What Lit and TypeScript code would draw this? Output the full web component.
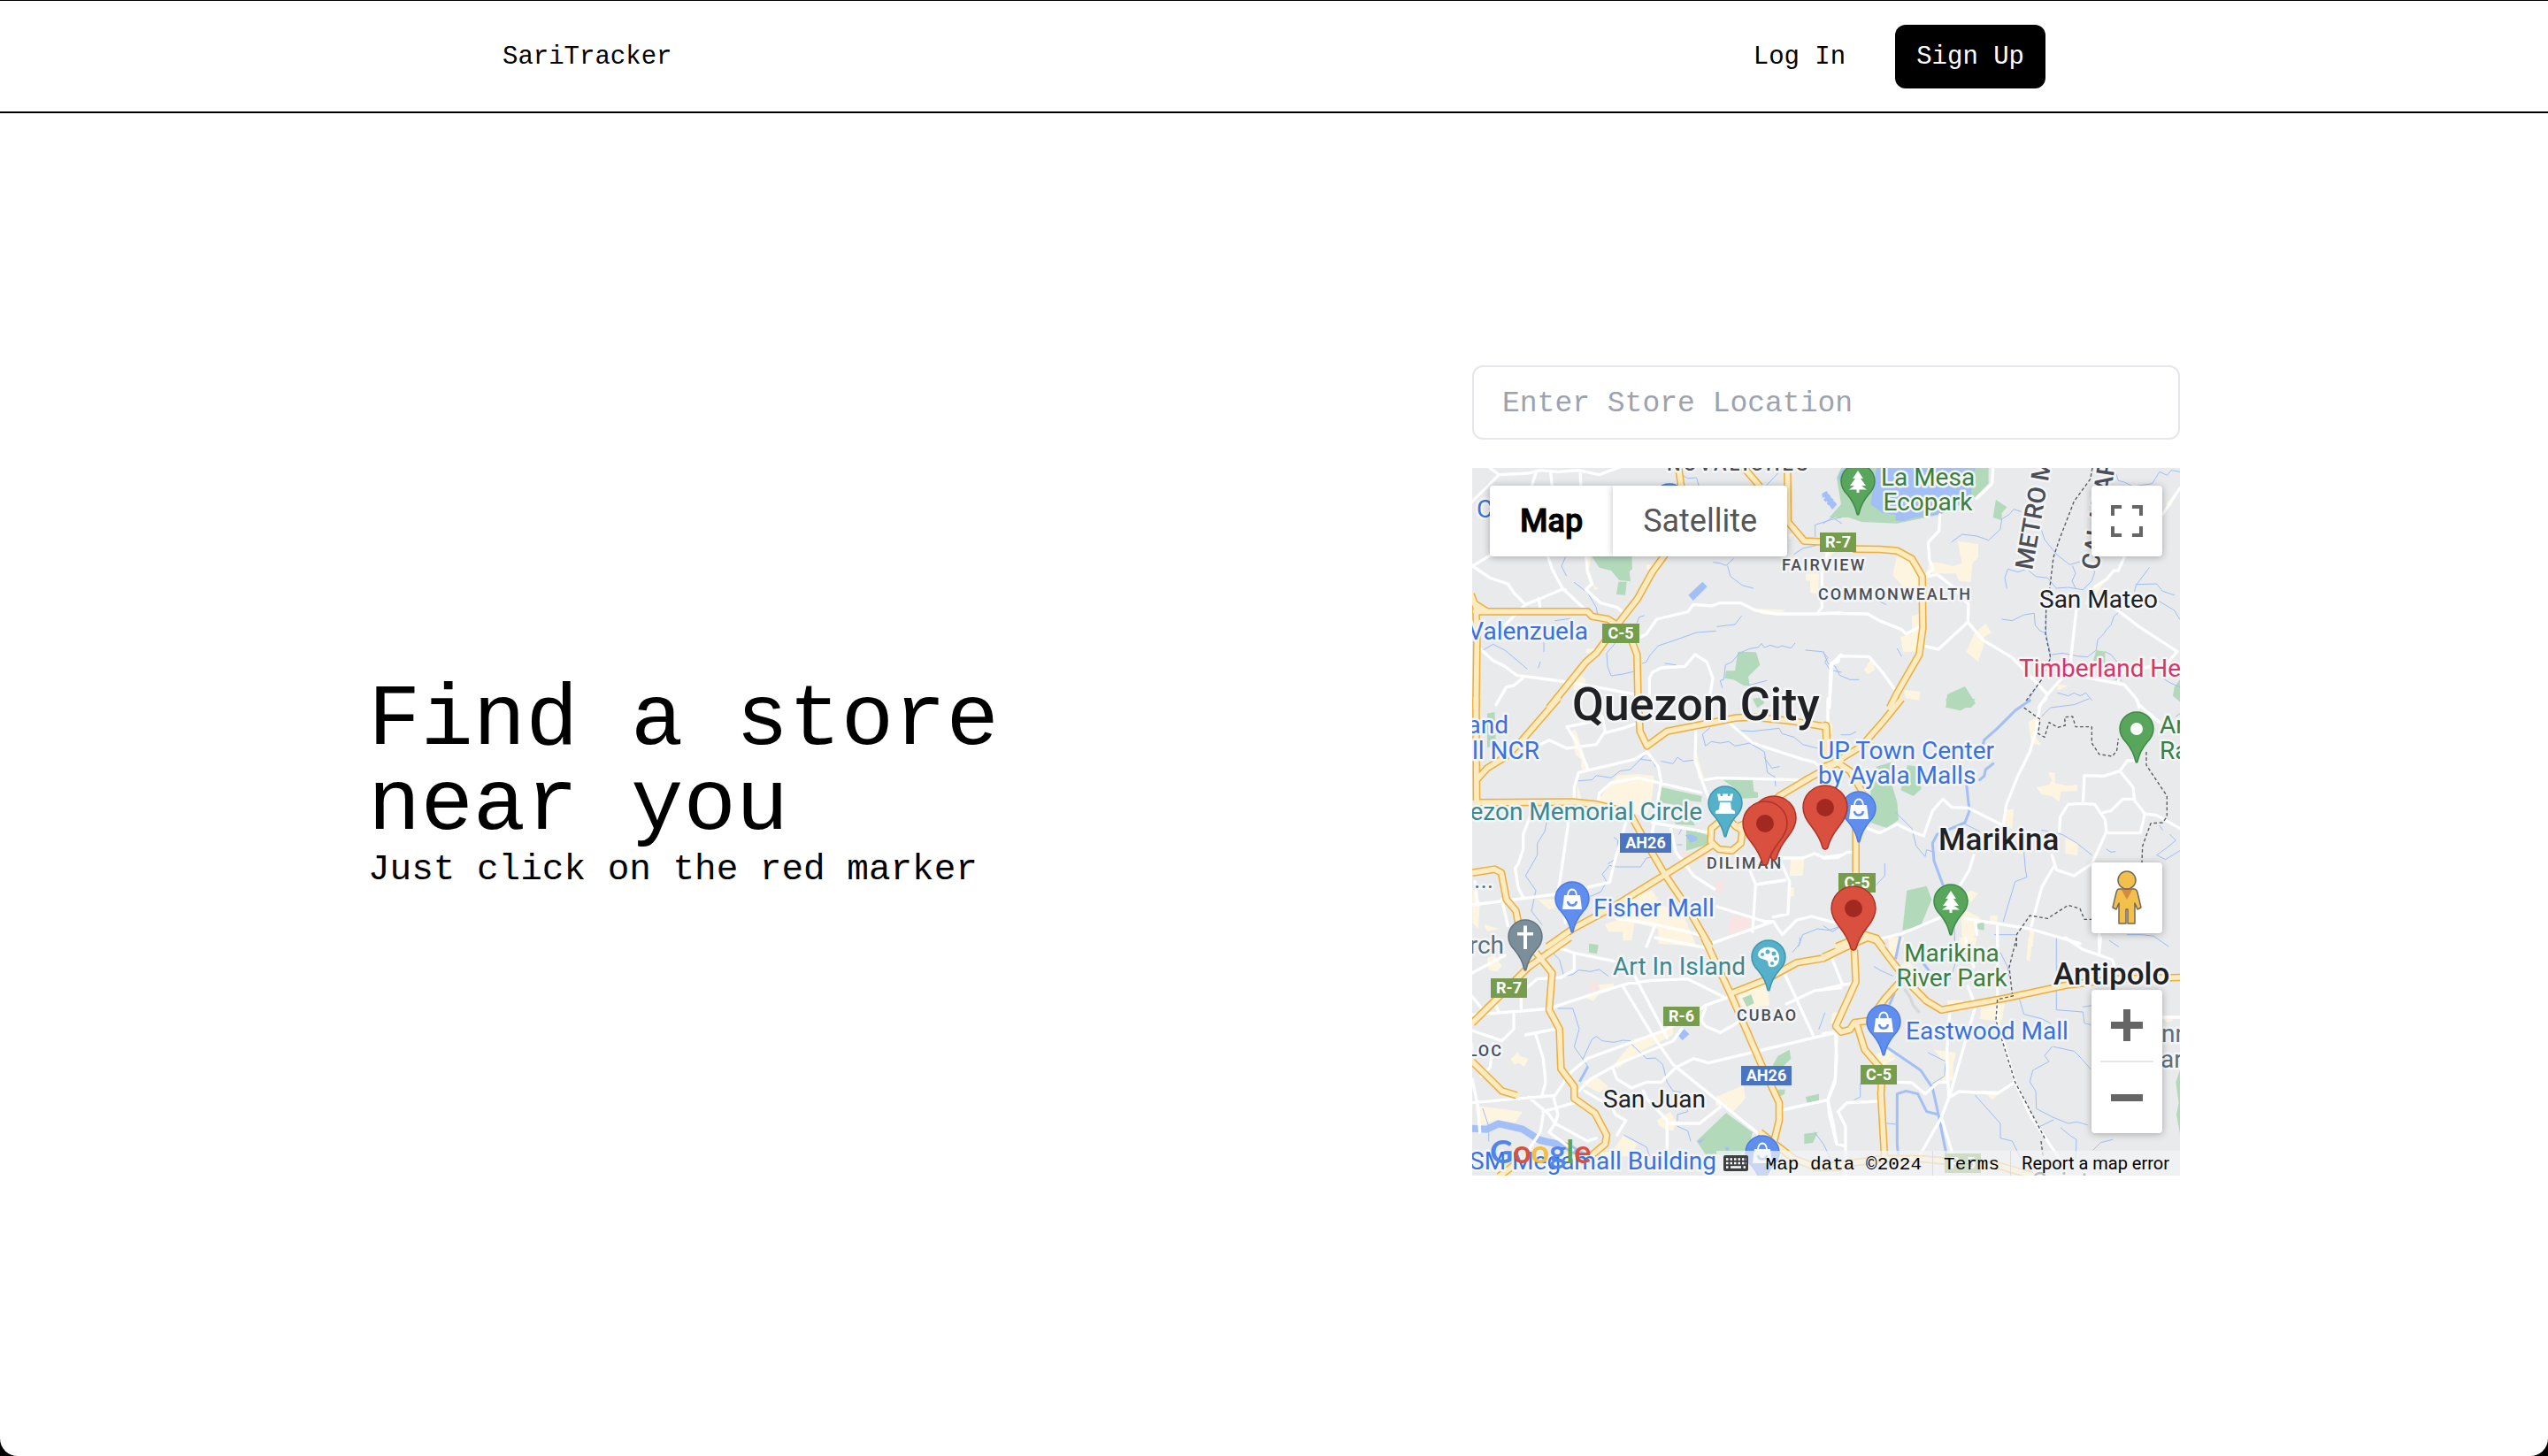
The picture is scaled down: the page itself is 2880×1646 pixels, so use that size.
import { LitElement, html, svg, css } from "lit";
import { customElement, state } from "lit/decorators.js";

/* ---------- Map geometry: six tiles, each drawn in its own coordinates ---------- */

interface Tile {
  x: number;
  y: number;
  park: string;
  built: string;
  pink?: string;
  lake?: string;
  river?: string;
  creek: string;
  street: string;
  highway: string;
  border?: string;
}

const TILES: Tile[] = [
  {
    x: -9, y: -27,
    park: "M413 325L550 325 552 370 542 378 546 412 508 408 480 375 440 365ZM505 413L533 413 528 458 498 456ZM910 650L972 652 985 695 945 735 950 765 930 765 895 745 865 740 870 715 900 715ZM960 810L990 805 1000 825 975 840Z",
    built: "M395 325L412 330 405 370 425 430 440 435 425 442 398 375ZM600 355L645 355 640 385 600 370ZM975 505L1070 508 1050 528 985 522ZM1140 385L1185 385 1182 455 1155 450 1155 410 1140 408ZM395 640L460 640 440 660 395 655ZM370 725L395 745 385 780 350 780ZM1080 250L1100 250 1085 270ZM1190 300L1240 310 1220 330Z",
    lake: "M742 458L790 413 806 430 758 477ZM1195 115L1210 105 1216 112 1197 130ZM1200 134L1219 116 1225 124 1208 143ZM1211 147L1228 128 1235 136 1218 155ZM1222 159L1238 140 1245 150 1232 166Z",
    creek: "M325 330L312 360 328 392M355 415L400 450 430 500 435 530M45 645L80 625 120 645 195 708M252 620L252 650M240 685L233 705M290 545L340 538M495 620L465 655 468 700 480 732 520 726 555 718M840 565L900 558 922 530M835 580L770 585 700 610 640 630 610 665 600 685 585 690M592 528L575 533 568 552M827 347L850 350 870 358 895 335M875 360L885 395 925 425 962 435M663 690L700 695M1103 622L1090 638 1060 630 1045 636 1020 628 1000 636 990 622 980 635 950 640 915 655 890 685 868 695 862 745 850 748 857 772M945 765L1008 748M1140 645L1195 650 1215 670 1205 685 1222 712 1260 720M1100 320L1130 300 1175 290M1172 260L1172 220 1235 200 1260 195M718 50L740 62 770 60 778 90M1008 85L1050 40",
    street: "M5 145L100 50 200 45 240 35 300 40 370 35 440 50 520 20M60 20L100 50M225 45L210 90M275 40L280 90M375 40L378 90M10 360L75 320M10 360L70 400 130 420 150 450 190 490 240 470 310 440 325 440M190 490L120 560M235 470L240 505M265 325L280 370 315 435 395 510M395 325L400 380 415 420 395 440 445 485 500 500 525 520M580 600L600 590 635 540 740 515 760 490 820 495 850 485 920 485 970 510 1040 522 1180 522 1260 518M1215 310L1195 380 1195 500 1180 520M35 640L80 680 120 700 160 730 310 750 440 772 560 795M180 740L150 765 125 770 90 830M610 800L610 740 620 720 650 705 730 700 765 660 805 685 825 740 815 800M1260 660L1230 690 1220 840",
    highway: "M5 455L22 500 25 620 22 840M20 514L400 514 415 530 470 540 500 560M22 490L60 514M708 20L718 90 700 250 660 325 620 380 570 470 500 560 430 655 395 685 270 840M925 20L985 90M545 600L568 660 572 840M1078 20L1080 210 1135 275 1200 278",
  },
  {
    x: 1191, y: -27,
    park: "M45 60L60 27 560 27 560 80 510 130 395 185 250 215 130 210 85 195 20 195 60 150ZM585 135L622 160 605 180 605 205 575 195ZM420 795L480 768 516 825 500 840 415 840ZM925 645L955 650 955 690 915 680ZM985 745L1010 715 1010 750ZM1209 745L1190 770 1185 800 1209 820Z",
    built: "M455 275L525 285 525 330 505 350 500 415 460 410 450 385 390 385 350 380 360 345 400 350 440 360 470 350ZM250 320L290 330 335 395 340 430 270 430 235 390ZM300 530L325 520 330 650 270 650 262 600 300 590ZM510 590L550 555 570 585 545 600 545 625 525 685 485 650ZM165 670L175 712 150 725 138 712ZM270 780L328 785 325 815 280 808ZM915 430L950 415 905 490 885 490ZM790 760L830 765 795 782ZM1160 150L1190 120 1180 155ZM540 50L560 55 560 80 540 80Z",
    lake: "M180 27L515 27 505 60 500 130 395 185 310 195 270 208 245 205 245 185 200 180 160 150ZM50 60L60 35 75 27 62 80ZM0 120L10 107 45 152 30 168Z",
    creek: "M435 278L470 252 520 258 560 272 600 235 605 200 630 185 645 167 670 175M735 225L750 270 790 320 835 355 870 345 900 350 920 380 910 410 880 440 830 432 790 435 760 400 720 395 690 370 660 380 625 370 615 400 622 435M845 360L855 385 843 410 855 435M605 540L640 545 680 525 715 520 718 560 735 580 750 585M775 660L810 655 860 665 895 668 925 645 930 610 950 590 960 575 975 560 985 530 1010 510 1005 490M755 510L755 590 768 650 770 680M740 745L690 820M1055 445L1060 425 1105 365M1060 422L1130 420 1150 445 1190 458M1090 460L1140 480 1190 510 1208 540M1209 40L1180 35 1165 52 1140 40 1115 80 1050 90 1020 75 1000 70 990 40M795 790L830 800 850 790 870 800 890 790 910 815M955 650L975 660 1000 690 1010 720M0 650L15 690 40 700 55 730 90 745 120 745M250 640L265 665M190 480L212 490M0 215L30 195 62 215M1150 740L1175 755 1209 770",
    street: "M575 27L572 80 520 130M395 185L392 240 355 280 360 340 372 370 340 398M340 398L385 388 440 430 492 490 490 550 390 642 345 632M490 550L540 610 640 670 760 795 730 840M760 795L835 710 858 505M835 725L930 745 1020 762 1065 815 1070 840M920 430L960 405 985 375 1000 375 1020 330M1150 185L1209 95M985 500L1070 565 1200 650 1165 690 1010 720 1000 750M0 520L150 522 190 545 265 575 280 590 325 567M20 840L25 690 50 685 55 665 155 667 200 720 250 790",
    highway: "M100 302L190 303 250 308 300 335 335 395 337 570 325 660 250 790 225 840",
    border: "M912 27L905 65 850 140 800 270 780 330 768 430 755 510 753 590 770 670 740 745 685 820",
  },
  {
    x: -9, y: 783,
    park: "M650 300L788 330 785 350 740 345 730 365 640 350ZM860 275L960 275 965 315 978 318 978 335 900 340 895 300ZM735 440L770 450 815 465 820 490 735 515ZM680 400L750 400 765 430 700 425ZM60 50L85 45 90 160 60 165ZM965 0L1000 0 980 30Z",
    built: "M500 260L570 255 625 262 620 330 600 400 540 385 430 350 470 300ZM480 690L620 650 650 700 720 720 770 840 640 830 640 780 560 760 550 820 520 820 520 790 470 790 460 765 500 750ZM345 110L360 105 405 240 380 240 378 205 360 190ZM770 180L785 240 800 280 775 270ZM1090 540L1135 540 1130 600 1085 600ZM1080 640L1100 640 1100 670 1085 670ZM365 290L380 340 365 340ZM230 680L290 680 290 710 270 715ZM10 640L35 690 30 780 10 760ZM50 765L100 780 60 790Z",
    pink: "M690 345L725 335 750 350 760 370 740 372 720 358 690 360ZM885 735L955 740 950 790 875 800ZM835 620L862 612 855 660 835 655ZM715 525L745 518 815 530 800 542 740 540Z",
    lake: "M732 462L750 460 772 468 772 480 750 488Z",
    creek: "M370 278L415 275 430 260 480 268 510 245 545 240 580 205 600 185M580 205L620 210 630 230M650 212L690 220 705 198 725 212 760 208M880 80L920 108 960 110 1050 100 1060 118 1100 130 1130 155 1190 170M815 98L790 120 800 160 820 145 850 150 880 145 900 160 950 150 1000 180 1010 250 1035 265 1038 295M1000 200L1025 235 1050 230M265 400L255 450 230 490 230 530 190 600 225 650 210 720 245 765M635 535L600 540 580 570 540 570 500 570 475 565 450 595 465 620 445 655 410 670M490 470L503 480 500 540 470 560M720 440L710 460M705 495L720 495M1115 840L1130 800 1180 780 1220 785 1260 770",
    street: "M602 180L560 205 370 250 355 300 355 345M602 180L640 230 650 280 630 400 620 455M768 95L765 210 800 310 845 420M435 350L440 320 480 285 570 268 785 318M800 275L840 268 1130 275M205 400L182 460 182 510 165 560 155 575 165 640 180 670M335 420L315 560 300 660M0 700L300 662 475 622 490 560 530 420M400 235L365 150 330 95 450 70M450 60L460 115 520 100 560 85M230 160L270 140 330 168 430 155 460 110M880 80L960 150 1130 205 1170 215 1200 245M680 430L700 520 760 600 830 645M620 420L820 455M905 530L950 580 970 630 960 790M970 630L1070 615M1050 540L1085 620 1080 730 1030 740M1040 540L1130 540 1170 525 1200 538 1260 530M840 705L1000 755 1030 755 1060 800 1110 750 1160 738 1260 765M500 745L630 765 780 800M630 765L600 840M820 830L1030 755M110 680L130 770M18 620L28 700M325 660L325 760",
    highway: "M22 0L24 345M300 0L170 150 125 195 60 235 24 275M24 352L350 350 430 358 520 380 550 400 600 490 665 600 740 710 815 840M572 0L578 110 602 160 670 110 900 65 960 62 1090 75 1210 95 1213 200M1260 210L1150 270 1050 330 990 390 930 425 905 435 885 415 850 415 820 440 818 485 845 510 890 515 920 490 925 450 905 430M825 495L665 595 480 710 350 780 265 840M9 590L85 578 108 590 125 680 158 720 165 760",
  },
  {
    x: 1191, y: 783,
    park: "M160 310L180 230 230 215 235 300 250 350 255 410 215 438 160 420ZM262 310L285 225 320 230 332 305 305 330ZM283 650L350 635 367 680 330 770 268 785ZM520 765L545 757 545 785 520 780ZM415 0L515 0 500 20 465 40 420 30Z",
    built: "M722 300L765 292 775 275 762 250 785 250 785 285 825 295 862 292 860 312 805 315 800 350 775 330 740 325ZM695 80L725 60 720 130 738 158 705 150ZM620 378L645 373 640 440 615 430ZM820 470L865 490 860 530 820 525ZM465 710L530 740 510 810 470 810ZM500 650L525 660 500 690 480 660ZM700 780L715 780 710 840 695 840ZM565 735L590 735 590 760 565 755ZM0 80L30 85 30 120 0 130ZM640 520L680 500 680 525Z",
    river: "M700 5L650 40 590 100 545 140 530 200M530 275L545 262 550 240 575 220M485 290L495 380 480 420 385 460 370 490 375 550 405 630",
    creek: "M245 385L300 440 315 500 345 535 350 512 375 520M480 425L530 450M740 445L810 460 860 490 910 530M680 520L685 580 690 605 650 620 610 755M208 560L208 600 180 630M1175 460L1195 480 1165 505 1130 530 1160 545 1209 515M60 122L90 122 110 112M1140 430L1150 445M0 770L30 790 70 765M960 510L975 520 990 518M445 780L445 840M740 60L770 30 850 20 900 0M580 800L650 800M1030 800L1080 800 1120 805 1170 840M1195 60L1209 50",
    street: "M755 0L735 20 720 110 700 180 660 260 620 360 610 430M610 430L490 370 435 368 405 340 370 380 340 465 300 450 250 425 190 455 150 440M510 530L495 580 465 630M780 570L740 640 705 770M885 260L880 355 830 358 803 400 800 450M880 355L920 358 955 410 960 450 910 560 850 600 790 580 775 530M885 260L950 262 1005 245 1050 300 1055 345 1090 390 1130 395 1209 440M1055 340L1015 340 975 380 950 385M1090 390L1075 455 960 455M1005 245L1030 210 1065 210M0 540L50 538 80 520 110 520M190 815L270 795 400 740M480 745L700 780 870 830M515 750L520 800M590 770L590 840M1060 0L1070 20 1140 80M15 0L15 85M935 795L935 840",
    highway: "M265 0L200 80 130 160 40 215 0 232M40 212L90 245 135 320M0 90L8 90 12 190M110 440L110 590M45 840L140 800 180 812 200 840",
    border: "M680 30L735 70 728 118 750 130 765 80 795 97 820 90 818 62 845 60 855 95 910 95 910 150 935 188 980 195 995 175 1000 135M1095 180L1095 225 1165 330 1165 400 1150 420 1110 422 1082 500 1080 555M655 840L655 800 700 735 760 745 830 700 870 712 885 748 910 748",
  },
  {
    x: -9, y: 1593,
    park: "M770 690L870 595 960 660 950 700 920 735 800 735ZM405 20L437 25 432 55 405 50ZM925 205L955 193 965 222 940 235ZM1030 430L1045 402 1085 380 1090 410 1060 440 1028 440ZM1045 515L1070 515 1068 530 1050 540ZM1140 540L1185 530 1185 552 1145 560ZM1135 665L1180 660 1165 695 1135 700Z",
    built: "M900 180L1010 150 1018 230 930 240ZM140 412L165 388 172 402 200 410 185 438 168 425 150 430ZM490 430L560 345 690 305 690 330 590 380 500 445ZM835 540L930 500 935 545 890 595 860 570 835 570ZM635 620L680 590 700 622 690 655 665 650 645 640ZM20 570L180 590 155 628 90 618 30 640ZM380 490L430 470 470 505 440 525 390 500ZM520 672L570 700 545 740 470 745ZM60 70L85 60 110 95 95 115 65 110ZM440 190L420 215 395 205 405 190ZM435 160L490 155 485 175 445 190ZM1230 255L1260 250 1260 300 1225 290ZM410 720L490 730 470 750Z",
    pink: "M402 155L430 143 442 172 410 188Z",
    lake: "M705 330L728 310 745 328 722 348ZM775 690L797 680 780 700ZM865 710L880 710 880 722 870 722Z",
    river: "M375 485L400 440",
    creek: "M280 50L305 75 320 130 350 125 370 110 410 115 440 108 470 130M300 240L350 240 372 310 355 370 400 435M385 410L415 345 430 335 450 350 490 355 520 348 545 350 550 362 600 410 630 408 655 430 670 490 690 520 720 525 740 590 705 600 705 620M705 640L740 655 750 690M525 670L600 710 610 740M1170 660L1200 700 1230 760M1205 255L1185 310M1120 0L1120 20 1095 50M45 580L65 640 65 690",
    street: "M285 235L440 185 540 155 620 145 740 140 790 165 860 200M870 205L800 230 740 270 660 315 400 410 340 460 290 535 9 560M290 30L355 52 490 80M355 52L355 110 310 135 230 140 175 185 175 240M520 165L620 330 690 430 980 665M550 110L670 340M9 262L285 240M90 230L100 255M150 260L150 310M190 330L290 310M9 120L120 60M370 520L410 480 500 430 690 350 720 310M485 440L500 480 550 510 600 490 650 490 700 440 760 410 810 425 1240 322M800 240L785 280 800 300 850 322 890 300 920 280M1065 115L1165 330M1075 225L1170 180 1260 170M1060 585L1215 550 1240 480 1245 330M1215 550L1220 600 1245 700M390 520L440 550 480 570 495 600 530 620 500 670M590 520L600 545 670 620 670 720M670 630L780 630 850 575M225 330L250 410 258 490 245 540M9 480L30 580 35 660M285 540L300 600 290 630 400 690 430 680M200 540L270 600 290 630M250 590L355 560M250 600L240 660 200 720M290 630L270 660 350 720M9 200L50 250M9 315L110 350 150 310M80 360L70 440 40 470M630 0L800 35",
    highway: "M340 0L200 100 100 200 9 290M225 50L280 120 270 245 305 310 310 445 355 505 355 545 425 595 465 670 460 700 400 750M795 0L885 190 985 420 1050 560 1050 620 1030 700M885 190L1000 145 1110 85 1200 70 1260 40M9 420L110 520 160 535M985 660L1100 750 1180 780 1260 778M100 810L180 750",
  },
  {
    x: 1191, y: 1593,
    park: "M1209 450L1195 490 1205 560 1197 600 1209 665Z",
    built: "M420 212L475 212 470 250 425 250ZM535 235L615 220 605 285 530 275ZM170 400L220 375 245 410 200 435ZM375 380L450 390 440 430 440 485 400 490 415 430ZM220 0L275 0 250 60 225 80ZM695 0L710 0 700 80 688 75ZM460 0L520 0 510 45 470 40ZM535 518L600 520 575 550ZM250 100L290 80 325 130 260 145ZM1150 270L1190 280 1165 288Z",
    river: "M260 0L245 70M330 75L358 112M220 375L330 450 370 510 390 600 420 750M390 600L350 590 320 530 280 520 250 530 250 700 255 750M240 190L225 225",
    creek: "M445 0L450 80 430 140M515 535L600 630 600 680 640 690 670 750M355 390L415 420 410 470 370 495M790 0L790 245 880 252 885 290 905 295M880 235L910 230M665 210L680 260 740 275 770 290 775 340M775 370L750 400 765 420 710 450 700 490 720 520 722 580 780 610 830 630 860 625 895 635M780 370L850 385 875 410 905 445M725 645L780 618M805 645L835 670 858 685 855 750M915 720L940 695 980 685M172 98L195 112 235 130M125 495L125 540 105 550M215 630L250 633M600 50L625 100 630 130M970 10L1000 30",
    street: "M25 60L65 160 0 175M100 155L65 160M0 325L40 320 45 400 40 490 15 550 35 640 45 700 70 706M190 555L80 560 50 590 75 640 75 806M515 235L430 530 400 610 320 750M428 250L418 400 425 540M430 540L460 522 590 528 650 490M400 610L440 740M590 0L590 280 650 490 700 600 800 750M480 0L510 100M490 165L515 230M250 490L300 492 345 530 390 490 420 490M820 0L880 40 980 75 990 110M940 0L935 55M1150 270L1209 270",
    highway: "M0 65L70 35 150 0 180 10 240 90 300 165 350 215 400 245 620 205 830 160 1000 140 1209 135M105 40L110 150 42 300 60 320 90 312 105 288 150 282M255 155L210 205 170 260M115 300L140 380 200 450 195 530 207 740M0 778L200 750 330 750 600 775 720 810",
    border: "M655 0L630 100 640 190M645 197L590 210 585 280 650 490 740 660 752 684M738 690L745 745",
  },
];

type Layer = Exclude<keyof Tile, "x" | "y">;

/* ---------- Labels, road shields and places (800-unit map square) ---------- */

interface Label {
  text: string;
  x: number;
  y: number;
  kind: string;
  anchor?: "start" | "middle" | "end";
  turn?: number;
}

const LABELS: Label[] = [
  { text: "NOVALICHES", x: 220, y: 3, kind: "district large" },
  { text: "FAIRVIEW", x: 350, y: 116, kind: "district" },
  { text: "COMMONWEALTH", x: 391, y: 149, kind: "district" },
  { text: "DILIMAN", x: 265, y: 453, kind: "district" },
  { text: "CUBAO", x: 299, y: 625, kind: "district" },
  { text: "SAMPALOC", x: 35, y: 665, kind: "district", anchor: "end" },
  { text: "METRO MANILA", x: 633, y: 116, kind: "region", turn: -80 },
  { text: "CALABARZON", x: 708, y: 116, kind: "region", turn: -81 },
  { text: "La Mesa", x: 515, y: 20, kind: "nature", anchor: "middle" },
  { text: "Ecopark", x: 515, y: 48, kind: "nature", anchor: "middle" },
  { text: "Marikina", x: 542, y: 558, kind: "nature", anchor: "middle" },
  { text: "River Park", x: 542, y: 586, kind: "nature", anchor: "middle" },
  { text: "Ar", x: 777, y: 300, kind: "nature" },
  { text: "Ra", x: 777, y: 329, kind: "nature" },
  { text: "C", x: 5, y: 56, kind: "shop" },
  { text: "Valenzuela", x: 131, y: 194, kind: "shop", anchor: "end" },
  { text: "and", x: 41, y: 300, kind: "shop", anchor: "end" },
  { text: "ll NCR", x: 76, y: 329, kind: "shop", anchor: "end" },
  { text: "UP Town Center", x: 391, y: 329, kind: "shop" },
  { text: "by Ayala Malls", x: 391, y: 357, kind: "shop" },
  { text: "Fisher Mall", x: 137, y: 507, kind: "shop" },
  { text: "Eastwood Mall", x: 490, y: 646, kind: "shop" },
  { text: "SM Megamall Building", x: 276, y: 793, kind: "shop", anchor: "end" },
  { text: "Quezon Memorial Circle", x: 260, y: 398, kind: "sight", anchor: "end" },
  { text: "Art In Island", x: 309, y: 573, kind: "sight", anchor: "end" },
  { text: "rch", x: 36, y: 549, kind: "civic", anchor: "end" },
  { text: "...", x: 2, y: 475, kind: "civic" },
  { text: "nn", x: 779, y: 649, kind: "civic" },
  { text: "ar", x: 778, y: 678, kind: "civic" },
  { text: "Timberland Heights", x: 618, y: 236, kind: "resort" },
  { text: "San Mateo", x: 641, y: 158, kind: "town" },
  { text: "San Juan", x: 148, y: 723, kind: "town" },
  { text: "Cainta", x: 632, y: 816, kind: "town" },
  { text: "Marikina", x: 527, y: 432, kind: "city" },
  { text: "Antipolo", x: 657, y: 584, kind: "city" },
  { text: "Quezon City", x: 113, y: 285, kind: "capital" },
];

const SHIELDS: Array<[string, number, number, number]> = [
  ["R-7", 393, 73, 41],
  ["C-5", 147, 176, 42],
  ["AH26", 167, 413, 58],
  ["C-5", 414, 458, 42],
  ["R-7", 21, 577, 41],
  ["R-6", 216, 609, 41],
  ["AH26", 304, 676, 57],
  ["C-5", 439, 675, 41],
  ["R-5", 534, 775, 41],
];

type Glyph = "tree" | "rook" | "bag" | "cross" | "palette" | "dot";

const PLACES: Array<[Glyph, number, number]> = [
  ["bag", 223, 37],
  ["tree", 436, 15],
  ["dot", 751, 295],
  ["rook", 286, 379],
  ["bag", 437, 385],
  ["bag", 113, 487],
  ["cross", 60, 530],
  ["palette", 335, 553],
  ["tree", 541, 490],
  ["bag", 465, 626],
  ["bag", 328, 774],
];

const GLYPHS = {
  tree: svg`<path fill="#fff" d="M0-12L6-3H3L9 5H4L10 9.500H1.500V13H-1.500V9.500H-10L-4 5H-9L-3-3H-6Z"/>`,
  rook: svg`<path fill="#fff" d="M-9-10.500h3.500v2.500h2.500v-2.500h6v2.500h2.500v-2.500H9L7.500-2.500h-15ZM-6-1H6L7 7 11 9v3H-11V9L-7 7Z"/>`,
  bag: svg`<path fill="#fff" d="M-9-4H9L11 12H-11Z"/><path fill="none" stroke="#fff" stroke-width="2" d="M-5-3C-5-13 5-13 5-3"/><path fill="none" stroke="#5f8eee" stroke-width="2.500" d="M-5 3C-4 9 4 9 5 3"/>`,
  cross: svg`<path fill="#fff" d="M-2-12.500H2V-5H9V-1.500H2V14H-2V-1.500H-9V-5H-2Z"/>`,
  palette: svg`<path fill="#fff" d="M-12-3C-11-9-5-12 2-11 9-10 12-5 12 1 12 8 8 12 2 11-2 10 1 6-2 4-5 2-12 2-12-3Z"/><g fill="#54b1c9"><circle cx="-7" cy="-3" r="2"/><circle cx="-1" cy="-6" r="2.500"/><circle cx="6" cy="-4" r="2.500"/><circle cx="8" cy="2" r="2"/><circle cx="4" cy="7" r="2"/></g>`,
  dot: svg`<circle r="7" fill="#fff"/>`,
};

interface Store {
  name: string;
  x: number;
  y: number;
}

const STORES: Store[] = [
  { name: "Store in Diliman East", x: 341, y: 396 },
  { name: "Store in Diliman", x: 331, y: 402 },
  { name: "Store near UP Town Center", x: 399, y: 384 },
  { name: "Store near Marikina River", x: 431, y: 498 },
];

@customElement("store-map")
export class StoreMap extends LitElement {
  static styles = css`
    :host {
      display: block;
      position: relative;
      aspect-ratio: 1;
      overflow: hidden;
      background: #e8eaec;
      font-family: Roboto, "Liberation Sans", sans-serif;
      color: #000;
    }
    svg { display: block; }
    .canvas { position: absolute; inset: 0; width: 100%; height: 100%; }
    .shape { stroke: none; }
    .line { fill: none; stroke-linecap: round; stroke-linejoin: round; }
    .built { fill: #fdf5e0; }
    .pink { fill: #f8e4e2; }
    .park { fill: #b2d9ba; }
    .lake { fill: #a3bff7; }
    .river { stroke: #a3bff7; stroke-width: 9; }
    .bay { stroke: #a3bff7; stroke-width: 24; }
    .runway { stroke: #d5d9dc; stroke-width: 10; }
    .creek { stroke: #9fbef6; stroke-width: 3; }
    .street { stroke: #fff; stroke-width: 10; }
    .highway-edge { stroke: #edae3a; stroke-width: 26; stroke-linecap: butt; }
    .highway { stroke: #fcebc1; stroke-width: 17; }
    .border { stroke: #55585c; stroke-width: 4; stroke-dasharray: 11 8; stroke-linecap: butt; }
    .label {
      font-size: 28px;
      paint-order: stroke;
      stroke: #f4f5f7;
      stroke-width: 5px;
      stroke-linejoin: round;
    }
    .district { font-size: 18px; font-weight: 500; letter-spacing: 2px; fill: #4b4f55; }
    .large { font-size: 22px; letter-spacing: 3px; }
    .region { font-size: 28px; font-weight: 500; fill: #4b4f55; }
    .nature { fill: #3a8040; }
    .shop { fill: #3972df; }
    .sight { fill: #3c8891; }
    .civic { fill: #587280; }
    .resort { fill: #d93468; }
    .town { fill: #202124; }
    .city { font-size: 35px; font-weight: 500; fill: #202124; }
    .capital { font-size: 52px; font-weight: 500; fill: #202124; }
    .shield { fill: #769d4c; }
    .shield.asian { fill: #4a74c0; }
    .shield-text { font-size: 18px; font-weight: 700; fill: #fff; text-anchor: middle; }
    .place { stroke-width: 1.5; }
    .place.tree, .place.dot { fill: #58a55c; stroke: #3c8a45; }
    .place.bag { fill: #5f8eee; stroke: #4a7be2; }
    .place.rook, .place.palette { fill: #54b1c9; stroke: #3d96ae; }
    .place.cross { fill: #7b8f9b; stroke: #60757f; }
    .logo {
      position: absolute;
      left: 20px;
      bottom: 4px;
      font: 700 36px/48px Lato, sans-serif;
      text-decoration: none;
    }
    .c-blue { color: #5086ec; }
    .c-red { color: #d9503f; }
    .c-yellow { color: #f2be42; }
    .c-green { color: #58a55c; }
    .legal {
      position: absolute;
      right: 0;
      bottom: 0;
      display: flex;
      align-items: center;
      height: 28px;
      font-size: 20px;
      line-height: 28px;
      white-space: nowrap;
      background: rgba(243, 244, 245, 0.72);
    }
    .legal > * { padding: 0 12px; }
    .legal a { color: #000; text-decoration: none; border-left: 1px solid #dcdcdc; }
    .legal .mono {
      padding-top: 4px;
      line-height: 24px;
      font-size: 21px;
      font-family: "Liberation Mono", monospace;
    }
    .legal .keys { border: 0; padding: 0 8px; background: none; }
    .marker {
      position: absolute;
      width: 52px;
      height: 74px;
      margin: -26px 0 0 -26px;
      padding: 0;
      border: 0;
      background: none;
      cursor: pointer;
    }
    .kind {
      position: absolute;
      top: 20px;
      left: 20px;
      display: flex;
      border-radius: 4px;
      overflow: hidden;
      background: #fff;
      box-shadow: 0 1px 8px rgba(0, 0, 0, 0.3);
    }
    .kind button {
      height: 80px;
      padding: 0 34px;
      border: 0;
      background: #fff;
      color: #565656;
      font: 400 36px/80px Roboto, "Liberation Sans", sans-serif;
      cursor: pointer;
    }
    .kind button + button { box-shadow: 0 0 8px rgba(0, 0, 0, 0.25); }
    .kind button.on { color: #000; font-weight: 500; -webkit-text-stroke: 1px #000; }
    .tools {
      position: absolute;
      top: 20px;
      right: 20px;
      bottom: 48px;
      display: flex;
      flex-direction: column;
      gap: 64px;
    }
    .tool, .zoom {
      border: 0;
      border-radius: 4px;
      padding: 0;
      background: #fff;
      box-shadow: 0 1px 8px rgba(0, 0, 0, 0.3);
    }
    .tool, .zoom button {
      display: grid;
      place-items: center;
      width: 80px;
      height: 80px;
      cursor: pointer;
    }
    .tool:first-child { margin-bottom: auto; }
    .zoom button { border: 0; padding: 0; background: none; }
    .zoom hr { margin: 0 10px; border: 0; height: 2px; background: #e6e6e6; }
  `;

  @state() private satellite = false;

  private layer(name: Layer, cls: string) {
    return TILES.map((t) =>
      t[name] ? svg`<path class=${cls} transform="translate(${t.x} ${t.y})" d=${t[name]!}></path>` : null
    );
  }

  private terrain() {
    return html`<svg class="canvas" viewBox="0 0 2400 2400" aria-hidden="true">
      ${this.layer("built", "shape built")}
      ${this.layer("pink", "shape pink")}
      ${this.layer("park", "shape park")}
      ${this.layer("lake", "shape lake")}
      <path class="line bay" d="M-10 2240L50 2243 90 2224 170 2242 230 2280 320 2300 400 2345" />
      <path class="line runway" d="M1468 1770L1485 1795 1495 1822 1515 1845" />
      ${this.layer("river", "line river")}
      ${this.layer("creek", "line creek")}
      ${this.layer("street", "line street")}
      ${this.layer("highway", "line highway-edge")}
      ${this.layer("highway", "line highway")}
      ${this.layer("border", "line border")}
    </svg>`;
  }

  private names() {
    return html`<svg class="canvas" viewBox="0 0 800 800">
      ${SHIELDS.map(
        ([t, x, y, w]) => svg`<rect class=${t.startsWith("A") ? "shield asian" : "shield"} x=${x} y=${y} width=${w} height="22"></rect>
          <text class="shield-text" x=${x + w / 2} y=${y + 17}>${t}</text>`
      )}
      ${LABELS.map(
        (l) => svg`<text class="label ${l.kind}" text-anchor=${l.anchor ?? "start"}
          transform="translate(${l.x} ${l.y}) rotate(${l.turn ?? 0})">${l.text}</text>`
      )}
      ${PLACES.map(
        ([g, x, y]) => svg`<g transform="translate(${x} ${y})">
          <path class="place ${g}" d="M-19 0a19 19 0 1 1 38 0C19 6 16 11 12 15 6 22 3 28 1 37a1 1 0 0 1-2 0C-3 28-6 22-12 15-16 11-19 6-19 0Z"></path>
          ${GLYPHS[g]}
        </g>`
      )}
    </svg>`;
  }

  render() {
    return html`
      ${this.terrain()} ${this.names()}
      <a class="logo" href="#google" aria-label="Google"><span class="c-blue">G</span><span class="c-red">o</span><span class="c-yellow">o</span><span class="c-blue">g</span><span class="c-green">l</span><span class="c-red">e</span></a>
      <div class="legal">
        <button class="keys" aria-label="Keyboard shortcuts">
          <svg width="28" height="18" viewBox="0 0 28 18">
            <rect width="28" height="18" rx="2" fill="#3c4043" />
            <path stroke="#fff" stroke-width="2.500" stroke-dasharray="2.500 2" d="M3 4.500H26M3 9H26" />
            <path stroke="#fff" stroke-width="2.500" d="M3 13.500H5.500M8 13.500H20M22.500 13.500H25" />
          </svg>
        </button>
        <span class="mono">Map data ©2024</span>
        <a class="mono" href="#terms">Terms</a>
        <a href="#report">Report a map error</a>
      </div>
      ${STORES.map(
        (s) => html`<button class="marker" aria-label=${s.name} style="left:${s.x / 8}%;top:${s.y / 8}%">
          <svg width="52" height="74" viewBox="0 0 52 74">
            <path fill="#d9503f" stroke="#b03226" stroke-width="1.500" d="M1 26a25 25 0 0 1 50 0C51 35 46 42 41 48 34 57 31 63 29 71 28 74 24 74 23 71 21 63 18 57 11 48 6 42 1 35 1 26Z" />
            <circle cx="26" cy="26" r="10" fill="#a1291f" />
          </svg>
        </button>`
      )}
      <div class="kind">
        <button class=${this.satellite ? "" : "on"} @click=${() => (this.satellite = false)}>Map</button>
        <button class=${this.satellite ? "on" : ""} @click=${() => (this.satellite = true)}>Satellite</button>
      </div>
      <div class="tools">
        <button class="tool" aria-label="Toggle fullscreen view">
          <svg width="36" height="36" viewBox="0 0 36 36" fill="#666">
            <path d="M0 0H12V4H4V12H0ZM24 0H36V12H32V4H24ZM0 24H4V32H12V36H0ZM32 24H36V36H24V32H32Z" />
          </svg>
        </button>
        <button class="tool" aria-label="Street View">
          <svg width="36" height="62" viewBox="0 0 36 62" fill="#f3c04c" stroke="#6e6a60" stroke-width="1.500" stroke-linejoin="round">
            <path d="M9 21H26Q29 21 30 25L34 42 30 44 27 37V60H19V44H17V60H9V37L6 44 2 42 6 25Q7 21 9 21Z" />
            <path fill="#d68940" stroke="none" d="M12 22H24L18 33Z" />
            <circle cx="18" cy="11" r="10" />
          </svg>
        </button>
        <div class="zoom">
          <button aria-label="Zoom in">
            <svg width="36" height="36" viewBox="0 0 36 36" fill="#666"><path d="M14 0H22V14H36V22H22V36H14V22H0V14H14Z" /></svg>
          </button>
          <hr />
          <button aria-label="Zoom out">
            <svg width="36" height="36" viewBox="0 0 36 36" fill="#666"><path d="M0 14H36V22H0Z" /></svg>
          </button>
        </div>
      </div>
    `;
  }
}

@customElement("app-root")
export class AppRoot extends LitElement {
  static styles = css`
    :host {
      display: block;
      background: #000;
      color: #000;
      font-family: "Liberation Mono", "DejaVu Sans Mono", monospace;
    }
    * { box-sizing: border-box; }
    .page {
      display: flex;
      flex-direction: column;
      min-height: 100vh;
      background: #fff;
      border-radius: 0 0 20px 20px;
    }
    .bar {
      border-top: 1px solid #000;
      border-bottom: 2px solid #000;
    }
    .bar-inner {
      display: flex;
      align-items: center;
      justify-content: space-between;
      max-width: 1792px;
      height: 125px;
      margin: 0 auto;
      padding: 0 24px;
      font-size: 29px;
      line-height: 40px;
    }
    a { color: inherit; text-decoration: none; }
    .link { padding-top: 2px; }
    .actions { display: flex; align-items: center; gap: 56px; }
    .signup {
      padding: 17px 24px 15px;
      border: 0;
      border-radius: 12px;
      background: #000;
      color: #fff;
      font: inherit;
      cursor: pointer;
    }
    .content {
      flex: 1;
      display: flex;
      align-items: center;
      justify-content: space-between;
      gap: 64px;
      width: 100%;
      max-width: 2048px;
      margin: 0 auto;
    }
    .intro { flex: 0 1 768px; }
    h1 { margin: 0; font-weight: 400; font-size: 99px; line-height: 96px; }
    .intro p { margin: 0; font-size: 41px; line-height: 48px; }
    .finder {
      flex: 0 1 800px;
      display: flex;
      flex-direction: column;
      gap: 32px;
      padding-bottom: 32px;
    }
    .search {
      width: 100%;
      height: 84px;
      padding: 2px 32px 0;
      border: 2px solid #e5e7eb;
      border-radius: 12px;
      background: #fff;
      color: #000;
      font: 400 33px/48px "Liberation Mono", "DejaVu Sans Mono", monospace;
    }
    .search::placeholder { color: #9ca3af; opacity: 1; }
  `;

  render() {
    return html`
      <div class="page">
        <header class="bar">
          <nav class="bar-inner">
            <a class="link" href="#home">SariTracker</a>
            <div class="actions">
              <a class="link" href="#login">Log In</a>
              <button class="signup">Sign Up</button>
            </div>
          </nav>
        </header>
        <main class="content">
          <section class="intro">
            <h1>Find a store near you</h1>
            <p>Just click on the red marker</p>
          </section>
          <section class="finder">
            <input class="search" type="text" aria-label="Store location" placeholder="Enter Store Location" />
            <store-map></store-map>
          </section>
        </main>
      </div>
    `;
  }
}
